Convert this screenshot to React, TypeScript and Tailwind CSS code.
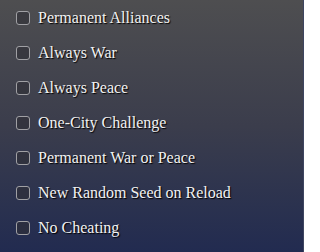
import React from "react";

const items = [
  "Permanent Alliances",
  "Always War",
  "Always Peace",
  "One-City Challenge",
  "Permanent War or Peace",
  "New Random Seed on Reload",
  "No Cheating",
];

export default function App() {
  return (
    <div className="w-[304px] h-[252px] overflow-hidden bg-gradient-to-b from-[#4e4e50] via-[#3b3d4c] to-[#222b50] border-r border-[#3e4560]">
      <div className="flex flex-col">
        {items.map((t) => (
          <label key={t} className="flex items-center h-[35px] pl-[16px] gap-[8px]">
            <span className="w-[14px] h-[14px] rounded-[3px] border border-[#a0a0a4] bg-[#2e2f35]/60 shrink-0" />
            <span
              className="text-[16px] text-[#f2f2f2] leading-none [text-shadow:1px_1px_1px_#000]"
              style={{ fontFamily: '"Liberation Serif", serif' }}
            >
              {t}
            </span>
          </label>
        ))}
      </div>
    </div>
  );
}
